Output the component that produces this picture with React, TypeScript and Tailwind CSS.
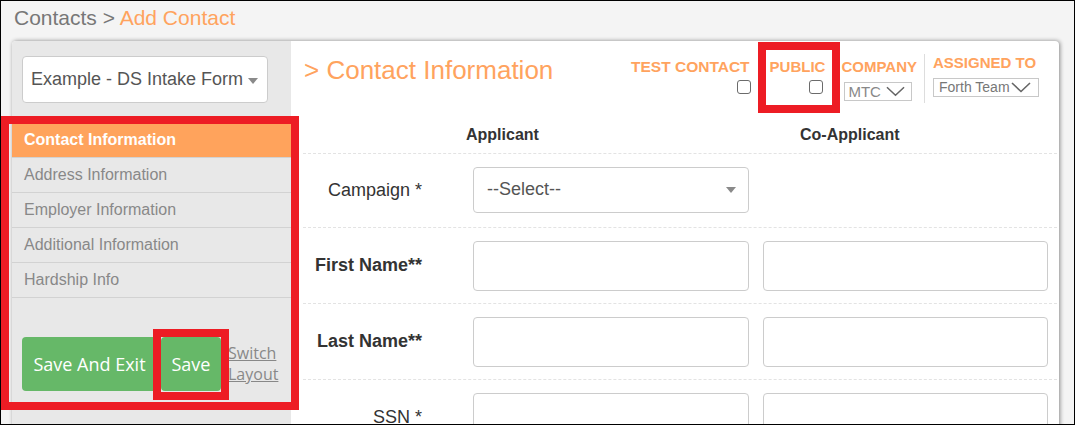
import React from "react";

const arial = { fontFamily: '"Liberation Sans", Arial, sans-serif' };
const openSans = { fontFamily: '"Open Sans", "Liberation Sans", sans-serif' };

function Caret({ className = "" }: { className?: string }) {
  return (
    <svg width="10" height="6" viewBox="0 0 10 6" className={className}>
      <path d="M0 0 L10 0 L5 6 Z" fill="#8a8a8a" />
    </svg>
  );
}

function Chevron({ w = 20 }: { w?: number }) {
  return (
    <svg width={w} height="11" viewBox="0 0 20 11">
      <path d="M1 1 L10 9.5 L19 1" fill="none" stroke="#666" strokeWidth="1.6" />
    </svg>
  );
}

function Checkbox() {
  return <div className="w-[14px] h-[14px] rounded-[3px] border border-[#6b6b6b] bg-white" />;
}

const navItems = ["Address Information", "Employer Information", "Additional Information", "Hardship Info"];

function FormRow({
  label,
  bold,
  tall = true,
  children,
}: {
  label: string;
  bold?: boolean;
  tall?: boolean;
  children: React.ReactNode;
}) {
  return (
    <div
      className={`shrink-0 flex items-center ${tall ? "h-[76px]" : "h-[74px]"} border-b border-dashed border-[#e3e3e3] box-border`}
    >
      <div className={`w-[119px] text-right text-[18px] text-[#333] ${bold ? "font-bold text-[18.5px]" : ""}`}>
        {label}
      </div>
      <div className="flex items-center ml-[51px] gap-[14px]">{children}</div>
    </div>
  );
}

function TextBox({ w }: { w: number }) {
  return (
    <div
      className="h-[50px] rounded-[4px] border border-[#cccccc] bg-white"
      style={{ width: w }}
    />
  );
}

export default function App() {
  return (
    <div
      className="relative w-[1075px] h-[425px] border border-black bg-[#f4f4f4] overflow-hidden box-border"
      style={arial}
    >
      {/* breadcrumb */}
      <div className="pl-[13px] pt-[4px] h-[40px] text-[21px] leading-[25px]">
        <span className="text-[#777]">Contacts &gt; </span>
        <span className="text-[#ffa35e]">Add Contact</span>
      </div>

      {/* card */}
      <div className="ml-[11px] w-[1047px] h-[400px] flex rounded-[4px] bg-white shadow-[1px_0_4px_rgba(0,0,0,0.45)] overflow-hidden">
        {/* sidebar */}
        <div className="w-[279px] shrink-0 bg-[#e8e8e8] flex flex-col">
          <div className="shrink-0 mt-[15px] ml-[10px] w-[246px] h-[47px] rounded-[4px] border border-[#cccccc] bg-white flex items-center pl-[8px] pr-[9px]">
            <span className="text-[18px] text-[#555] whitespace-nowrap">Example - DS Intake Form</span>
            <Caret className="ml-auto mt-[2px]" />
          </div>

          <div className="shrink-0 mt-[20px]">
            <div className="h-[35px] bg-[#ffa35c] border-b border-[#d2d2d2] flex items-center pl-[12px] text-[16px] font-bold text-white">
              Contact Information
            </div>
            {navItems.map((n) => (
              <div
                key={n}
                className="h-[35px] border-b border-[#d2d2d2] flex items-center pl-[12px] text-[16px] text-[#888]"
              >
                {n}
              </div>
            ))}
          </div>

          <div className="shrink-0 mt-[39px] ml-[10px] flex items-center" style={openSans}>
            <button className="w-[135px] h-[54px] rounded-[4px] bg-[#66b868] text-white text-[18px]">
              Save And Exit
            </button>
            <button className="ml-[4px] w-[60px] h-[54px] rounded-[4px] bg-[#66b868] text-white text-[18px]">
              Save
            </button>
            <div className="ml-[7px] text-[16px] leading-[21px] text-[#888] underline">
              Switch
              <br />
              Layout
            </div>
          </div>
        </div>

        {/* main */}
        <div className="flex-1 flex flex-col">
          <div className="shrink-0 h-[86px] flex items-start">
            <div className="pl-[13px] pt-[14px] text-[26px] leading-[30px] text-[#ffa35e] whitespace-nowrap">
              &gt; Contact Information
            </div>
            <div className="ml-auto flex items-start pr-[20px] text-[15px] font-bold text-[#ffa35e] leading-[17px]">
              <div className="flex flex-col items-end pt-[17px]">
                <span className="text-[15.5px]">TEST CONTACT</span>
                <div className="mt-[5px] mr-[-1px]">
                  <Checkbox />
                </div>
              </div>
              <div className="ml-[20px] flex flex-col items-end pt-[17px]">
                <span>PUBLIC</span>
                <div className="mt-[5px] mr-[2px]">
                  <Checkbox />
                </div>
              </div>
              <div className="ml-[16px] flex flex-col pt-[17px]">
                <span>COMPANY</span>
                <div className="mt-[7px] ml-[3px] w-[68px] h-[19px] border border-[#c8c8c8] flex items-center pl-[3px] gap-[5px] font-normal text-[15px] text-[#888]">
                  MTC
                  <Chevron w={19} />
                </div>
              </div>
              <div className="ml-[7px] mt-[13px] w-px h-[49px] bg-[#dddddd]" />
              <div className="ml-[8px] flex flex-col pt-[13px]">
                <span>ASSIGNED TO</span>
                <div className="mt-[7px] w-[106px] h-[19px] border border-[#c8c8c8] flex items-center pl-[5px] font-normal text-[14px] text-[#777] whitespace-nowrap">
                  Forth Team
                  <span className="ml-[1px]">
                    <Chevron w={20} />
                  </span>
                </div>
              </div>
            </div>
          </div>

          <div className="shrink-0 ml-[12px] mr-[2px] flex flex-col">
            <div className="shrink-0 h-[27px] flex items-start border-b border-dashed border-[#e3e3e3] text-[16px] font-bold text-[#333] leading-[16px]">
              <div className="w-[163px]" />
              <div className="w-[334px]">Applicant</div>
              <div>Co-Applicant</div>
            </div>

            <FormRow label="Campaign *" tall={false}>
              <div className="w-[276px] h-[46px] rounded-[4px] border border-[#cccccc] bg-white flex items-center pl-[13px] pr-[12px] mb-[2px]">
                <span className="text-[18px] text-[#555]">--Select--</span>
                <Caret className="ml-auto" />
              </div>
            </FormRow>
            <FormRow label="First Name**" bold>
              <TextBox w={276} />
              <TextBox w={285} />
            </FormRow>
            <FormRow label="Last Name**" bold>
              <TextBox w={276} />
              <TextBox w={285} />
            </FormRow>
            <FormRow label="SSN *">
              <TextBox w={276} />
              <TextBox w={285} />
            </FormRow>
          </div>
        </div>
      </div>

      {/* highlight frames */}
      <div className="absolute left-0 top-[115px] w-[298px] h-[294px] border-[8px] border-[#ed1c24] pointer-events-none" />
      <div className="absolute left-[152px] top-[328px] w-[76px] h-[71px] border-[8px] border-[#ed1c24] pointer-events-none" />
      <div className="absolute left-[757px] top-[41px] w-[82px] h-[71px] border-[8px] border-[#ed1c24] pointer-events-none" />
    </div>
  );
}
